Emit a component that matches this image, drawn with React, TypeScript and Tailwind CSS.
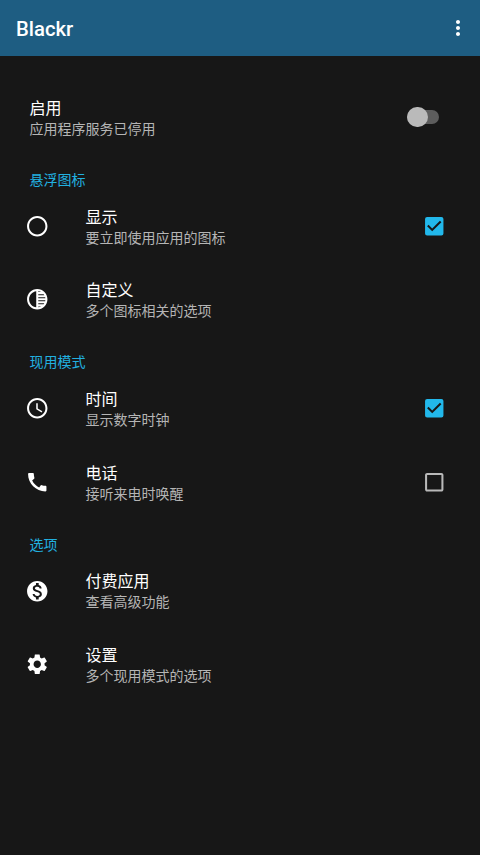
import { useState } from "react";
import type { IconType } from "react-icons";
import {
  MdAccessTime,
  MdCall,
  MdCheckBox,
  MdCheckBoxOutlineBlank,
  MdMonetizationOn,
  MdMoreVert,
  MdRadioButtonUnchecked,
  MdSettings,
  MdTonality,
} from "react-icons/md";

type Item = {
  id: string;
  title: string;
  summary: string;
  icon: IconType;
  checkable?: boolean;
};

const sections: { heading: string; items: Item[] }[] = [
  {
    heading: "悬浮图标",
    items: [
      { id: "show", title: "显示", summary: "要立即使用应用的图标", icon: MdRadioButtonUnchecked, checkable: true },
      { id: "customize", title: "自定义", summary: "多个图标相关的选项", icon: MdTonality },
    ],
  },
  {
    heading: "现用模式",
    items: [
      { id: "time", title: "时间", summary: "显示数字时钟", icon: MdAccessTime, checkable: true },
      { id: "phone", title: "电话", summary: "接听来电时唤醒", icon: MdCall, checkable: true },
    ],
  },
  {
    heading: "选项",
    items: [
      { id: "paid", title: "付费应用", summary: "查看高级功能", icon: MdMonetizationOn },
      { id: "settings", title: "设置", summary: "多个现用模式的选项", icon: MdSettings },
    ],
  },
];

function Labels({ title, summary }: { title: string; summary: string }) {
  return (
    <div className="flex-1 pt-[3.3px]">
      <div className="text-base leading-[21px] text-white">{title}</div>
      <div className="text-sm leading-[21px] text-[#b5b5b5]">{summary}</div>
    </div>
  );
}

function Switch({ on, onChange }: { on: boolean; onChange: () => void }) {
  return (
    <button
      role="switch"
      aria-checked={on}
      onClick={onChange}
      className={`mr-[41px] flex h-[21px] w-[31.7px] items-center ${on ? "justify-end" : "justify-start"}`}
    >
      <span className="flex h-[14px] w-full items-center justify-[inherit] rounded-full bg-[#5d5d5d]">
        <span className={`size-[20.5px] shrink-0 rounded-full ${on ? "bg-[#22b8eb]" : "bg-[#bababa]"}`} />
      </span>
    </button>
  );
}

export default function App() {
  const [enabled, setEnabled] = useState(false);
  const [checked, setChecked] = useState<Record<string, boolean>>({ show: true, time: true });

  const toggle = (id: string) => setChecked((prev) => ({ ...prev, [id]: !prev[id] }));

  return (
    <div className="min-h-screen bg-[#171717] font-[Roboto,'Noto_Sans_CJK_SC',sans-serif]">
      <header className="flex h-14 items-center justify-between bg-[#1e5d82] pr-2.5 pl-4">
        <h1 className="pt-0.5 text-[20.3px] font-medium text-white">Blackr</h1>
        <button aria-label="More">
          <MdMoreVert className="size-6 text-white" />
        </button>
      </header>

      <main className="pt-6">
        <div className="flex h-[73.9px] items-center pl-[29.5px]">
          <Labels title="启用" summary="应用程序服务已停用" />
          <Switch on={enabled} onChange={() => setEnabled(!enabled)} />
        </div>

        {sections.map((section) => (
          <section key={section.heading}>
            <h2 className="h-[35.4px] pt-4 pl-[29.5px] text-sm leading-[21px] text-[#22b1e0]">
              {section.heading}
            </h2>
            {section.items.map(({ id, title, summary, icon: Icon, checkable }) => (
              <div key={id} className="flex h-[73.5px] items-center pr-[33.5px] pl-[25px]">
                <Icon className="mr-9 size-[24.5px] shrink-0 text-white" />
                <Labels title={title} summary={summary} />
                {checkable && (
                  <button role="checkbox" aria-checked={!!checked[id]} aria-label={title} onClick={() => toggle(id)}>
                    {checked[id] ? (
                      <MdCheckBox className="size-[24.5px] text-[#22b8eb]" />
                    ) : (
                      <MdCheckBoxOutlineBlank className="size-[24.5px] text-[#b9b9b9]" />
                    )}
                  </button>
                )}
              </div>
            ))}
          </section>
        ))}
      </main>
    </div>
  );
}
